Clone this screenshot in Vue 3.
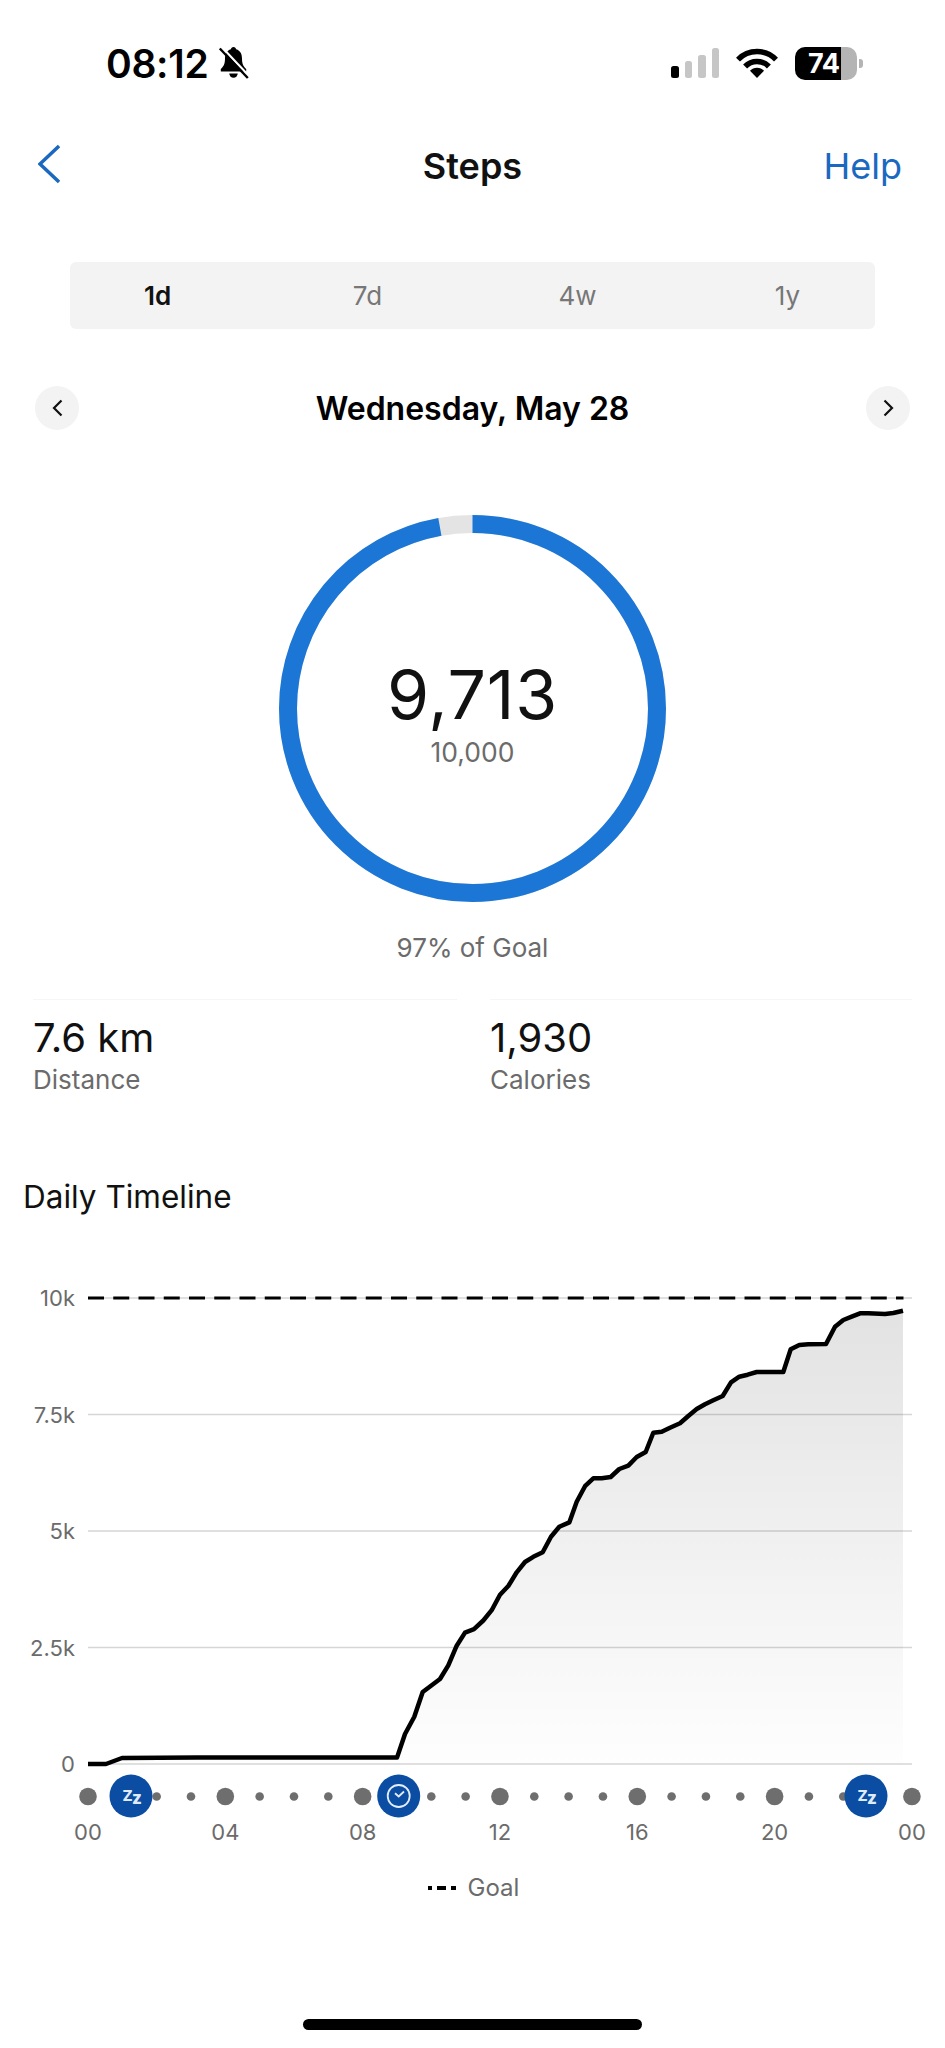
<template>
  <div class="screen">
    <div class="status">
      <div class="clock-side">
        <span class="time">08:12</span>
        <svg width="32" height="34" viewBox="0 0 32 34">
          <path d="M15.5 1c-1.5 0-2.5 1-2.6 2.3C8.5 4.5 7 8.5 7 12.5c0 5-1 7.5-4.2 10.5v2.4h25.4V23c-3.2-3-4.2-5.5-4.2-10.5 0-4-1.5-8-5.900-9.200C18 2 17 1 15.500 1z" fill="#000" />
          <path d="M11.300 27.500a4.200 4.200 0 0 0 8.400 0z" fill="#000" />
          <path d="M4.200 1.500 31 30" stroke="#fff" stroke-width="2.200" />
          <path d="M1.800 2.500 29.800 32" stroke="#000" stroke-width="2.400" />
        </svg>
      </div>
      <div class="status-icons">
        <div class="signal">
          <i class="bar on b1"></i>
          <i class="bar b2"></i>
          <i class="bar b3"></i>
          <i class="bar b4"></i>
        </div>
        <svg class="wifi" width="42" height="30" viewBox="0 0 42 30" fill="none" stroke="#000" stroke-width="5.500">
          <path d="M2 11.600A26.500 26.500 0 0 1 40 11.600" />
          <path d="M9.100 18.500A16.500 16.500 0 0 1 32.900 18.500" />
          <path d="M21 30 14 22.800A9.500 9.500 0 0 1 28 22.800z" fill="#000" stroke="none" />
        </svg>
        <div class="battery"><span>74</span></div>
        <i class="battery-nub"></i>
      </div>
    </div>

    <div class="nav">
      <svg class="back" width="22" height="40" viewBox="0 0 22 40" fill="none" stroke="#1a68c0" stroke-width="3.400">
        <path d="M21 2 2 20 21 38" />
      </svg>
      <span class="nav-title">Steps</span>
      <span class="nav-help">Help</span>
    </div>

    <div class="tabs">
      <span v-for="t in tabs" :key="t" class="tab" :class="{ active: t === '1d' }">{{ t }}</span>
    </div>

    <div class="date-row">
      <button class="round">
        <svg width="11" height="18" viewBox="0 0 11 18" fill="none" stroke="#111" stroke-width="2.200"><path d="M9.500 1.500 2 9l7.500 7.500" /></svg>
      </button>
      <span class="date">Wednesday, May 28</span>
      <button class="round">
        <svg width="11" height="18" viewBox="0 0 11 18" fill="none" stroke="#111" stroke-width="2.200"><path d="M1.500 1.500 9 9l-7.500 7.500" /></svg>
      </button>
    </div>

    <div class="ring">
      <svg width="387" height="387" viewBox="0 0 387 387" fill="none" stroke-width="18">
        <circle cx="193.500" cy="193.500" :r="radius" stroke="#e4e4e4" />
        <circle
          cx="193.500"
          cy="193.500"
          :r="radius"
          stroke="#1c76d6"
          :stroke-dasharray="ringDash"
          transform="rotate(-90 193.500 193.500)"
        />
      </svg>
      <div class="ring-text">
        <div class="ring-value">9,713</div>
        <div class="ring-goal">10,000</div>
      </div>
    </div>
    <div class="percent">97% of Goal</div>

    <div class="stats">
      <div class="stat">
        <div class="stat-value">7.6 km</div>
        <div class="stat-label">Distance</div>
      </div>
      <div class="stat">
        <div class="stat-value">1,930</div>
        <div class="stat-label">Calories</div>
      </div>
    </div>

    <h2 class="section">Daily Timeline</h2>

    <!-- viewBox uses page coordinates so the readings stay easy to check -->
    <svg class="chart" width="945" height="590" viewBox="0 1270 945 590">
      <defs>
        <linearGradient id="area" x1="0" y1="1298" x2="0" y2="1764" gradientUnits="userSpaceOnUse">
          <stop offset="0" stop-color="#000" stop-opacity="0.115" />
          <stop offset="1" stop-color="#000" stop-opacity="0.005" />
        </linearGradient>
      </defs>

      <g v-for="g in grid" :key="g.label">
        <line x1="88" x2="912" :y1="g.y" :y2="g.y" stroke="#d6d6d6" stroke-width="1.500" />
        <text x="75" :y="g.y + 8" text-anchor="end" class="axis">{{ g.label }}</text>
      </g>

      <path :d="areaPath" fill="url(#area)" />
      <line x1="88" x2="903.500" y1="1298" y2="1298" stroke="#000" stroke-width="3.200" stroke-dasharray="16 9.250" />
      <path :d="linePath" fill="none" stroke="#000" stroke-width="4.500" stroke-linejoin="round" />

      <circle v-for="h in hours" :key="h" :cx="hourX(h)" cy="1796.500" :r="h % 4 === 0 ? 8.800 : 4.300" fill="#6e6e6e" />
      <text v-for="h in labelHours" :key="'l' + h" :x="hourX(h)" y="1840" text-anchor="middle" class="axis tick">
        {{ String(h % 24).padStart(2, '0') }}
      </text>

      <g v-for="x in sleepMarks" :key="x">
        <circle :cx="x" cy="1796" r="21.500" fill="#0a4da2" />
        <text :x="x - 8.500" y="1800.500" class="zz">Z</text>
        <text :x="x + 1" y="1803.500" class="zz small-z">z</text>
      </g>

      <circle cx="398.700" cy="1796" r="21.500" fill="#0a4da2" />
      <circle cx="398.700" cy="1796" r="11" fill="none" stroke="#e3eefa" stroke-width="1.800" />
      <path d="M395 1793.300 398.700 1796.500 404 1791.500" fill="none" stroke="#e3eefa" stroke-width="1.800" />
    </svg>

    <div class="legend">
      <svg width="28" height="6" viewBox="0 0 28 6"><path d="M0 3h28" stroke="#000" stroke-width="4" stroke-dasharray="4 5 9 5 5" /></svg>
      <span>Goal</span>
    </div>

    <div class="home-bar"></div>
  </div>
</template>

<script setup>
const tabs = ['1d', '7d', '4w', '1y']

const radius = 184.500
const circumference = 2 * Math.PI * radius
const ringDash = `${circumference * 0.9713} ${circumference}`

const grid = [
  { label: '10k', y: 1298 },
  { label: '7.5k', y: 1414.500 },
  { label: '5k', y: 1531 },
  { label: '2.5k', y: 1647.500 },
  { label: '0', y: 1764 },
]

const hours = Array.from({ length: 25 }, (_, i) => i)
const labelHours = [0, 4, 8, 12, 16, 20, 24]
const hourX = (h) => 88 + h * 34.330

const sleepMarks = [131, 866]

// step curve, read off the reference
const points = [
  [88, 1764], [106, 1764], [122, 1758], [197, 1757.600], [397, 1757.600],
  [405, 1734], [414.300, 1716.800], [422.700, 1692], [431.700, 1685.200], [440, 1679],
  [448.300, 1665.300], [456.700, 1645.700], [465, 1632.600], [474, 1629.200], [483.300, 1620.500],
  [491.700, 1610.200], [500, 1594.700], [508.300, 1586], [516.700, 1572.300], [525, 1562],
  [533.300, 1556.800], [542.700, 1552.300], [551, 1536.800], [559.300, 1526.800], [569.300, 1522.400],
  [576.700, 1501.700], [585, 1486.200], [593.300, 1478.300], [601.700, 1478.300], [610.700, 1477],
  [619.300, 1469], [628.300, 1465.600], [636.700, 1457], [645.700, 1452], [653.300, 1432.700],
  [661.700, 1431.700], [670, 1427.700], [680, 1423.300], [688.300, 1416], [696.700, 1409],
  [705, 1404.300], [713.300, 1400.300], [722.700, 1396], [731, 1382.300], [739.300, 1376.700],
  [747.700, 1374.700], [756.700, 1372], [783.300, 1372], [790.700, 1349.300], [799.300, 1345],
  [808.300, 1344.300], [826, 1344], [835, 1326.700], [843.300, 1320], [851.700, 1316.700],
  [860, 1313.300], [868.300, 1313.300], [885, 1314], [893.300, 1313], [903, 1310.700],
]
const linePath = 'M' + points.map((p) => p.join(' ')).join('L')
const areaPath = linePath + 'L903 1764L88 1764Z'
</script>

<style>
body {
  background: #fff;
}
</style>

<style scoped>
.screen {
  width: 945px;
  height: 2048px;
  overflow: hidden;
  background: #fff;
  color: #111;
  font-family: Inter, "Liberation Sans", sans-serif;
}
.status {
  height: 127px;
  padding: 46px 82px 0 106px;
  box-sizing: border-box;
  display: flex;
  justify-content: space-between;
  align-items: flex-start;
}
.clock-side {
  display: flex;
  align-items: center;
  gap: 10px;
  height: 34px;
}
.time {
  font-size: 39px;
  font-weight: 600;
  color: #000;
  letter-spacing: -0.3px;
}
.status-icons {
  display: flex;
  align-items: center;
  height: 34px;
}
.signal {
  display: flex;
  align-items: flex-end;
  gap: 6px;
  height: 30px;
  margin-right: 17px;
}
.bar {
  width: 7.500px;
  border-radius: 2.500px;
  background: #c6c6c6;
}
.bar.on {
  background: #000;
}
.b1 { height: 12px; }
.b2 { height: 17px; }
.b3 { height: 23px; }
.b4 { height: 30px; }
.wifi {
  margin-right: 17px;
}
.battery {
  width: 62px;
  height: 33px;
  border-radius: 10px;
  background: linear-gradient(to right, #000 46px, #b4b4b4 46px);
  color: #fff;
  font-size: 27px;
  font-weight: 700;
  line-height: 33px;
  padding-left: 13px;
  box-sizing: border-box;
  overflow: hidden;
  letter-spacing: -0.5px;
}
.battery-nub {
  width: 4px;
  height: 9px;
  margin-left: 2px;
  background: #b4b4b4;
  border-radius: 0 3px 3px 0;
}
.nav {
  height: 78px;
  padding: 0 43px 0 38px;
  display: flex;
  align-items: center;
  justify-content: space-between;
  position: relative;
}
.back {
  margin-top: -5px;
}
.nav-title {
  position: absolute;
  left: 0;
  right: 0;
  text-align: center;
  font-size: 36px;
  font-weight: 600;
}
.nav-help {
  font-size: 36px;
  color: #1a68c0;
}
.tabs {
  margin: 57px 70px 0;
  height: 67px;
  background: #f3f3f3;
  border-radius: 6px;
  display: grid;
  grid-template-columns: repeat(4, 210px);
  justify-content: center;
  align-items: center;
}
.tab {
  text-align: center;
  font-size: 26px;
  color: #777;
}
.tab.active {
  color: #111;
  font-weight: 600;
}
.date-row {
  margin-top: 57px;
  padding: 0 35px;
  height: 44px;
  display: flex;
  align-items: center;
  justify-content: space-between;
}
.round {
  width: 44px;
  height: 44px;
  padding: 0;
  border: none;
  border-radius: 50%;
  background: #f3f3f3;
  display: flex;
  align-items: center;
  justify-content: center;
}
.date {
  font-size: 32px;
  font-weight: 600;
  color: #000;
}
.ring {
  margin: 85px auto 0;
  width: 387px;
  height: 387px;
  position: relative;
}
.ring svg {
  display: block;
}
.ring-text {
  position: absolute;
  left: 0;
  right: 0;
  top: 138px;
  text-align: center;
}
.ring-value {
  font-size: 68px;
  line-height: 82px;
  letter-spacing: 0.8px;
}
.ring-goal {
  font-size: 26.500px;
  line-height: 35px;
  color: #6b6b6b;
}
.percent {
  margin-top: 29px;
  text-align: center;
  font-size: 26px;
  line-height: 34px;
  color: #6b6b6b;
}
.stats {
  margin-top: 34px;
  padding: 0 33px;
  display: grid;
  grid-template-columns: 424px 422px;
  column-gap: 33px;
}
.stat {
  border-top: 1px solid #f6f6f6;
  padding-top: 13px;
}
.stat-value {
  font-size: 40px;
  line-height: 50px;
}
.stat-label {
  font-size: 26px;
  line-height: 34px;
  color: #6b6b6b;
}
.section {
  margin: 80px 0 0 23px;
  font-size: 31.500px;
  line-height: 40px;
  font-weight: 400;
}
.chart {
  display: block;
  margin-top: 53px;
}
.axis {
  font-size: 22px;
  fill: #6b6b6b;
}
.tick {
  font-size: 22px;
}
.zz {
  font-size: 15px;
  font-weight: 800;
  fill: #dfeafa;
}
.small-z {
  font-size: 17px;
}
.legend {
  margin-top: 10px;
  margin-left: 2px;
  display: flex;
  align-items: center;
  justify-content: center;
  gap: 12px;
  font-size: 24px;
  line-height: 36px;
  color: #6b6b6b;
}
.home-bar {
  margin: 113px auto 0;
  width: 339px;
  height: 11px;
  border-radius: 6px;
  background: #000;
}
</style>
